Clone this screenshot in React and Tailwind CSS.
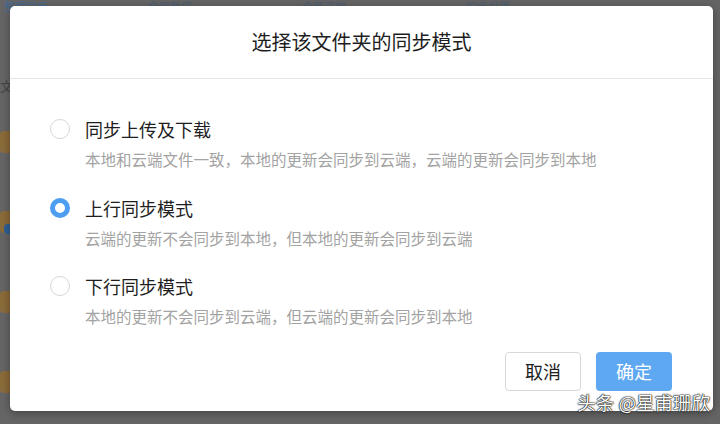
import { useState } from 'react';

const OPTIONS = [
  { id: 'both', label: '同步上传及下载', desc: '本地和云端文件一致，本地的更新会同步到云端，云端的更新会同步到本地' },
  { id: 'up', label: '上行同步模式', desc: '云端的更新不会同步到本地，但本地的更新会同步到云端' },
  { id: 'down', label: '下行同步模式', desc: '本地的更新不会同步到云端，但云端的更新会同步到本地' },
];

const font = { fontFamily: '"Noto Sans CJK SC", "Noto Sans", sans-serif' };

/* Dimmed app behind the modal */
const Backdrop = () => (
  <div className="flex flex-col h-full">
    <div className="flex items-start h-[16px] px-1 text-[11px] leading-[13px] text-[#3f5a7a] opacity-60">
      <span className="text-[#2f6bb0]">整理同步</span>
      <span className="ml-[100px]">全部暂停</span>
      <span className="ml-[110px]">全部开始</span>
      <span className="ml-[120px]">同步设置</span>
    </div>
    <div className="mt-[60px] text-[13px] text-[#444]">文件</div>
    <div className="flex flex-col gap-[58px] mt-[35px]">
      {[0, 1, 2, 3].map((i) => (
        <div key={i} className="flex items-center h-[22px]">
          <div className="w-[14px] h-[22px] bg-[#8a6b3a] rounded-sm" />
          {i === 1 && <div className="w-[8px] h-[10px] rounded-full bg-[#2f5f96] -ml-[10px] mt-[14px]" />}
        </div>
      ))}
    </div>
  </div>
);

const Radio = ({ checked }) =>
  checked ? (
    <span className="w-[20px] h-[20px] rounded-full border-[5px] border-[#4d9df0] bg-white shrink-0" />
  ) : (
    <span className="w-[20px] h-[20px] rounded-full border-[1.5px] border-[#d6d6d6] bg-white shrink-0" />
  );

export default function App() {
  const [mode, setMode] = useState('up');

  return (
    <div className="relative w-[720px] h-[424px] overflow-hidden bg-[#656565]" style={font}>
      <Backdrop />

      {/* Modal */}
      <div className="absolute left-[10px] top-[6px] w-[703px] h-[405px] bg-white rounded-[5px] flex flex-col shadow-[0_2px_8px_rgba(0,0,0,0.35)]">
        <div className="h-[73px] flex items-center justify-center border-b border-[#e4e4e4] text-[20px] text-[#1e1e1e]">
          选择该文件夹的同步模式
        </div>

        <div className="flex flex-col gap-[25.5px] pl-[40px] pt-[38px]">
          {OPTIONS.map((o) => (
            <div key={o.id} className="flex flex-col gap-[7px] cursor-pointer" onClick={() => setMode(o.id)}>
              <div className="flex items-center gap-[15px] h-[24px]">
                <Radio checked={mode === o.id} />
                <span className="text-[18px] leading-[24px] text-[#1e1e1e]">{o.label}</span>
              </div>
              <div className="pl-[35px] text-[15.5px] leading-[22px] text-[#a3a3a3]">{o.desc}</div>
            </div>
          ))}
        </div>

        <div className="mt-auto flex justify-end gap-[15px] pr-[41px] pb-[20px]">
          <button className="w-[76px] h-[39px] rounded-[4px] border border-[#d8d8d8] bg-white text-[18px] text-[#1e1e1e]">
            取消
          </button>
          <button className="w-[76px] h-[39px] rounded-[4px] bg-[#5ea8f2] text-[18px] text-white">
            确定
          </button>
        </div>
      </div>

      {/* Watermark */}
      <div className="absolute right-[10px] bottom-[11px] text-[18.5px] leading-[22px] text-white [text-shadow:0_0_2px_#000,0_0_1px_#000,0_0_1px_#000]">
        头条 @星甫珊欣
      </div>
    </div>
  );
}
